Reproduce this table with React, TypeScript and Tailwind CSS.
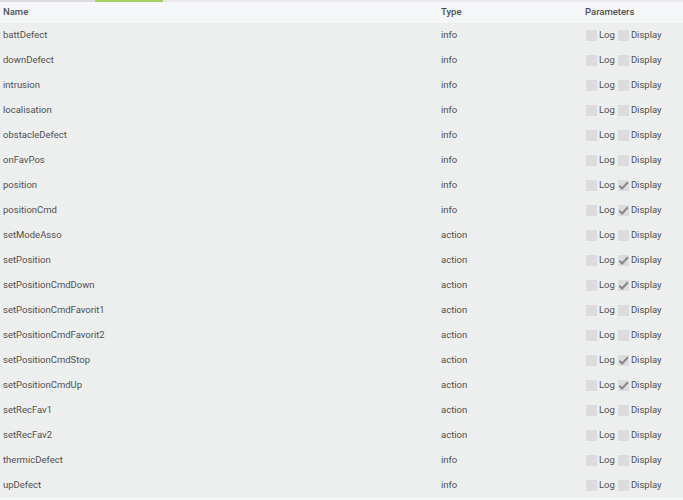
const rows: [string, string, boolean][] = [
  ['battDefect', 'info', false],
  ['downDefect', 'info', false],
  ['intrusion', 'info', false],
  ['localisation', 'info', false],
  ['obstacleDefect', 'info', false],
  ['onFavPos', 'info', false],
  ['position', 'info', true],
  ['positionCmd', 'info', true],
  ['setModeAsso', 'action', false],
  ['setPosition', 'action', true],
  ['setPositionCmdDown', 'action', true],
  ['setPositionCmdFavorit1', 'action', false],
  ['setPositionCmdFavorit2', 'action', false],
  ['setPositionCmdStop', 'action', true],
  ['setPositionCmdUp', 'action', true],
  ['setRecFav1', 'action', false],
  ['setRecFav2', 'action', false],
  ['thermicDefect', 'info', false],
  ['upDefect', 'info', false],
];

function Box({ checked }: { checked: boolean }) {
  return (
    <span className="w-[11px] h-[11px] bg-[#dcdcdc] flex items-center justify-center">
      {checked && (
        <svg width="11" height="11" viewBox="0 0 12 12" fill="none">
          <path d="M1.5 6.2 L4.5 9.2 L10.8 2.5" stroke="#888" strokeWidth="2.2" />
        </svg>
      )}
    </span>
  );
}

export default function App() {
  return (
    <div className="w-[683px] h-[500px] bg-[#f6f7f9] text-[9.5px] text-[#505050] overflow-hidden" style={{ fontFamily: 'Roboto, "Liberation Sans", sans-serif' }}>
      <div className="flex h-[2px]">
        <div className="w-[95px] bg-[#dcdcde]" />
        <div className="w-[68px] bg-[#a8d060]" />
        <div className="flex-1 bg-[#e9e9eb]" />
      </div>
      <div className="flex h-[21px] items-center font-medium">
        <div className="w-[441px] pl-[3px]">Name</div>
        <div className="w-[144px]">Type</div>
        <div>Parameters</div>
      </div>
      <div className="bg-[#edeeee]">
        {rows.map(([name, type, disp]) => (
          <div key={name} className="flex h-[25px] items-center">
            <div className="w-[441px] pl-[3px]">{name}</div>
            <div className="w-[145px]">{type}</div>
            <div className="flex items-center">
              <Box checked={false} />
              <span className="ml-[2px] mr-[3px]">Log</span>
              <Box checked={disp} />
              <span className="ml-[2px]">Display</span>
            </div>
          </div>
        ))}
      </div>
    </div>
  );
}
